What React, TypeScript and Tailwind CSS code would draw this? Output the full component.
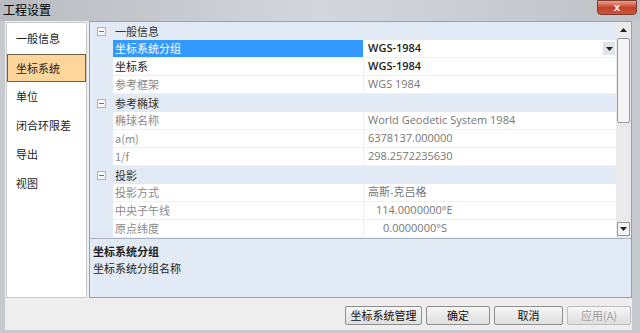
import React from "react";

type Row =
  | { kind: "cat"; label: string }
  | {
      kind: "item";
      label: string;
      value: string;
      selected?: boolean;
      bold?: boolean;
      dim?: boolean;
      indent?: string;
      dropdown?: boolean;
    };

const rows: Row[] = [
  { kind: "cat", label: "一般信息" },
  { kind: "item", label: "坐标系统分组", value: "WGS-1984", selected: true, bold: true, dropdown: true },
  { kind: "item", label: "坐标系", value: "WGS-1984", bold: true },
  { kind: "item", label: "参考框架", value: "WGS 1984", dim: true },
  { kind: "cat", label: "参考椭球" },
  { kind: "item", label: "椭球名称", value: "World Geodetic System 1984", dim: true },
  { kind: "item", label: "a(m)", value: "6378137.000000", dim: true },
  { kind: "item", label: "1/f", value: "298.2572235630", dim: true },
  { kind: "cat", label: "投影" },
  { kind: "item", label: "投影方式", value: "高斯-克吕格", dim: true },
  { kind: "item", label: "中央子午线", value: "114.0000000°E", dim: true, indent: "pl-[8px]" },
  { kind: "item", label: "原点纬度", value: "0.0000000°S", dim: true, indent: "pl-[15px]" },
];

const navItems = ["一般信息", "坐标系统", "单位", "闭合环限差", "导出", "视图"];

const font = "font-['Microsoft_YaHei','Noto_Sans_CJK_SC',sans-serif]";

function Expander() {
  return (
    <div className="w-[9px] h-[9px] border border-[#a7b3c2] bg-white flex items-center justify-center">
      <div className="w-[5px] h-px bg-[#6b7a8c]" />
    </div>
  );
}

function Arrow({ up }: { up?: boolean }) {
  return (
    <svg width="7" height="4" viewBox="0 0 7 4">
      {up ? <path d="M0 4 L3.5 0 L7 4 Z" fill="#222" /> : <path d="M0 0 L3.5 4 L7 0 Z" fill="#222" />}
    </svg>
  );
}

function PropertyRow({ row }: { row: Row }) {
  if (row.kind === "cat") {
    return (
      <div className="flex h-[18px] bg-[#e2ebf5]">
        <div className="w-[23px] flex items-center justify-center">
          <Expander />
        </div>
        <div className="pl-[2px] flex items-center text-[#333] text-[11px]">{row.label}</div>
      </div>
    );
  }
  return (
    <div className="flex h-[18px]">
      <div className="w-[23px] bg-[#e2ebf5]" />
      <div
        className={`w-[250px] pl-[2px] flex items-center text-[11px] border-b border-[#eef0f2] ${
          row.selected ? "bg-[#3399ff] text-white" : row.bold ? "bg-white text-[#222]" : "bg-white text-[#8a8a8a]"
        }`}
      >
        {row.label}
      </div>
      <div
        className={`flex-1 flex items-center justify-between bg-white border-b border-l border-[#eef0f2] text-[11px] font-['Segoe_UI','Open_Sans','Noto_Sans_CJK_SC',sans-serif] pl-[4px] ${
          row.bold ? "text-[#222] font-semibold" : "text-[#777]"
        }`}
      >
        <span className={row.indent ?? ""}>{row.value}</span>
        {row.dropdown && (
          <div className="w-[12px] h-[13px] mr-[1px] bg-[#dfe4ea] flex items-center justify-center">
            <Arrow />
          </div>
        )}
      </div>
    </div>
  );
}

export default function App() {
  return (
    <div className={`w-[640px] h-[333px] bg-[#c6cace] flex flex-col overflow-hidden ${font}`}>
      {/* title bar */}
      <div className="h-[21px] flex justify-between bg-gradient-to-r from-[#b8bcc1] via-[#d3d6da] to-[#bfc3c8]">
        <span className="pl-[3px] pt-[2px] text-[12px] text-black leading-[16px]">工程设置</span>
        <div className="w-[40px] h-[15px] mr-[3px] rounded-b-[4px] bg-gradient-to-b from-[#e8a190] via-[#c7422a] to-[#c8543a] border border-[#7b3b2e] flex items-center justify-center">
          <span className="text-white text-[11px] font-bold leading-none font-['Liberation_Sans',sans-serif]">x</span>
        </div>
      </div>

      {/* body */}
      <div className="flex-1 ml-[5px] mr-[8px] mb-[3px] bg-[#eeeeee] flex flex-col">
        <div className="flex h-[277px]">
          {/* nav */}
          <div className="w-[81px] ml-[1px] mt-[1px] bg-white border border-[#c9c9c9] flex flex-col">
            {navItems.map((item, i) => (
              <div
                key={item}
                className={`pl-[8px] flex text-[11px] text-[#222] ${
                  i === 0
                    ? "h-[31px] items-start pt-[6px] border border-transparent"
                    : i === 1
                    ? "h-[28px] items-center bg-[#fed59b] border border-[#6f6047]"
                    : "h-[29px] items-center border border-transparent"
                }`}
              >
                {item}
              </div>
            ))}
          </div>

          {/* property grid */}
          <div className="flex-1 ml-[2px] flex flex-col border border-[#a0a0a0] bg-white">
            <div className="flex h-[216px]">
              <div className="flex-1 flex flex-col">
                {rows.map((row, i) => (
                  <PropertyRow key={i} row={row} />
                ))}
              </div>
              {/* scrollbar */}
              <div className="w-[15px] bg-[#eaeaea] flex flex-col items-center">
                <div className="h-[16px] w-full flex items-center justify-center">
                  <Arrow up />
                </div>
                <div className="w-[13px] h-[85px] bg-[#f4f4f4] border border-[#9a9a9a] rounded-[2px]" />
                <div className="flex-1" />
                <div className="h-[14px] w-[13px] mb-[2px] bg-[#f4f4f4] border border-[#9a9a9a] flex items-center justify-center">
                  <Arrow />
                </div>
              </div>
            </div>
            {/* description */}
            <div className="flex-1 border-t border-[#a9b4c2] bg-[#e2ebf5] pl-[3px] pt-[4px] text-[11px] text-[#222]">
              <div className="font-bold leading-[17px]">坐标系统分组</div>
              <div className="leading-[17px]">坐标系统分组名称</div>
            </div>
          </div>
        </div>

        {/* buttons */}
        <div className="flex-1 flex items-center justify-end gap-[4px] pr-[1px] pt-[2px]">
          {[
            { t: "坐标系统管理", w: "w-[77px]" },
            { t: "确定", w: "w-[64px]" },
            { t: "取消", w: "w-[69px]" },
            { t: "应用(A)", w: "w-[64px]", off: true },
          ].map((b) => (
            <div
              key={b.t}
              className={`${b.w} h-[19px] flex items-center justify-center text-[11px] border border-[#8e8e8e] rounded-[2px] bg-gradient-to-b from-[#f6f6f6] to-[#dedede] ${
                b.off ? "text-[#a0a0a0] border-[#bcbcbc]" : "text-[#111]"
              }`}
            >
              {b.t}
            </div>
          ))}
        </div>
      </div>
    </div>
  );
}
